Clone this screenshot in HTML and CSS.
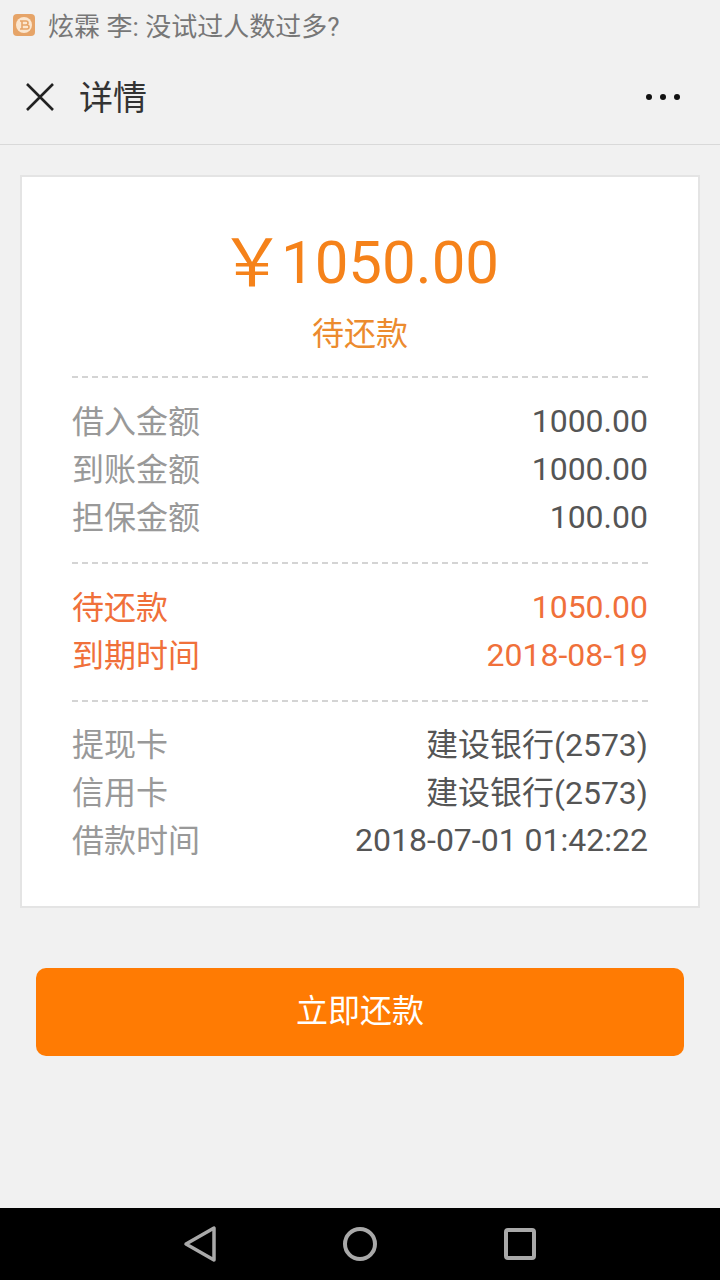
FILE: index.html
```html
<!DOCTYPE html>
<html lang="zh">

<head>
  <meta charset="UTF-8">
  <meta name="viewport" content="width=device-width, initial-scale=1.0">
  <title>详情</title>
  <link rel="stylesheet" href="styles.css">
</head>

<body>
  <div class="screen">
    <!-- 通知栏 -->
    <div class="notice">
      <svg class="notice-icon" width="24" height="24" viewBox="0 0 24 24">
        <rect x="1" y="1" width="22" height="22" rx="4" fill="#e6a468"/>
        <circle cx="12" cy="12" r="8" fill="#fbe6cf"/>
        <path d="M10 8h4a2 2 0 0 1 0 4h-4h5a2 2 0 0 1 0 4h-5zM10 8v8M8 8h2M8 16h2" fill="none" stroke="#e6a468" stroke-width="1.6"/>
      </svg>
      <span class="notice-text">炫霖 李: 没试过人数过多?</span>
    </div>

    <!-- 标题栏 -->
    <div class="topbar">
      <svg class="close-icon" width="30" height="30" viewBox="0 0 30 30">
        <path d="M2 2L28 28M28 2L2 28" stroke="#222" stroke-width="2.6" fill="none"/>
      </svg>
      <span class="topbar-title">详情</span>
      <div class="dots"><i></i><i></i><i></i></div>
    </div>

    <div class="content">
      <div class="card">
        <div class="amount"><span class="yen">￥</span>1050.00</div>
        <div class="status">待还款</div>

        <div class="group">
          <div class="row"><span class="label">借入金额</span><span class="value">1000.00</span></div>
          <div class="row"><span class="label">到账金额</span><span class="value">1000.00</span></div>
          <div class="row"><span class="label">担保金额</span><span class="value">100.00</span></div>
        </div>

        <div class="group group-red">
          <div class="row"><span class="label">待还款</span><span class="value">1050.00</span></div>
          <div class="row"><span class="label">到期时间</span><span class="value">2018-08-19</span></div>
        </div>

        <div class="group group-cards">
          <div class="row"><span class="label">提现卡</span><span class="value cjk">建设银行(2573)</span></div>
          <div class="row"><span class="label">信用卡</span><span class="value cjk">建设银行(2573)</span></div>
          <div class="row"><span class="label">借款时间</span><span class="value">2018-07-01 01:42:22</span></div>
        </div>
      </div>

      <button class="pay-btn"><span>立即还款</span></button>
    </div>

    <!-- 系统导航栏 -->
    <div class="navbar">
      <svg width="36" height="40" viewBox="0 0 36 40">
        <path d="M4 20L32 4V36Z" fill="none" stroke="#a9a9a9" stroke-width="3.5" stroke-linejoin="round"/>
      </svg>
      <svg width="36" height="36" viewBox="0 0 36 36">
        <circle cx="18" cy="18" r="15" fill="none" stroke="#a9a9a9" stroke-width="4"/>
      </svg>
      <svg width="36" height="32" viewBox="0 0 36 32">
        <rect x="4" y="2" width="28" height="28" rx="2" fill="none" stroke="#a9a9a9" stroke-width="4"/>
      </svg>
    </div>
  </div>
</body>

</html>
```

FILE: styles.css
```css
* {
  box-sizing: border-box;
}

body {
  margin: 0;
  background-color: #f1f1f1;
  font-family: Roboto, "Noto Sans CJK SC", sans-serif;
}

.screen {
  width: 720px;
  height: 1280px;
  display: flex;
  flex-direction: column;
}

.notice {
  height: 50px;
  display: flex;
  align-items: center;
  padding-left: 12px;
  gap: 12px;
}

.notice-text {
  padding-bottom: 2px;
  font-size: 26px;
  color: #777;
}

.topbar {
  height: 95px;
  display: flex;
  align-items: center;
  padding: 0 25px;
  border-bottom: 1px solid #d9d9d9;
}

.topbar-title {
  margin-left: 24px;
  padding-bottom: 4px;
  font-size: 34px;
  color: #333;
}

.dots {
  margin-left: auto;
  margin-right: 15px;
  display: flex;
  gap: 8px;
}

.dots i {
  width: 6px;
  height: 6px;
  border-radius: 50%;
  background-color: #111;
}

.content {
  flex: 1;
  padding: 30px 20px 0;
}

.card {
  height: 733px;
  background-color: #fff;
  border: 2px solid #e4e4e4;
  padding: 50px 50px 0;
}

.amount {
  height: 72px;
  line-height: 72px;
  text-align: center;
  font-size: 60px;
  color: #f5821a;
  white-space: nowrap;
}

.yen {
  margin-left: -2px;
  margin-right: -4px;
  line-height: 0;
  font-size: 66px;
  vertical-align: -3px;
}

.status {
  margin-top: 13px;
  line-height: 44px;
  text-align: center;
  font-size: 32px;
  color: #ec8b2e;
}

.group {
  margin-top: 20px;
  padding-top: 19px;
  border-top: 2px dashed #d4d4d4;
}

.group-red {
  margin-top: 21px;
}

.group-cards {
  margin-top: 21px;
  padding-top: 18px;
}

.row {
  height: 48px;
  display: flex;
  justify-content: space-between;
  align-items: center;
  font-size: 32px;
}

.label {
  padding-bottom: 5px;
  color: #999;
}

.value {
  color: #555;
}

.value.cjk {
  padding-bottom: 5px;
}

.group-red .label,
.group-red .value {
  color: #f0703a;
}

.pay-btn {
  display: block;
  width: 648px;
  height: 88px;
  margin: 60px 0 0 16px;
  padding: 0 0 8px;
  border: none;
  border-radius: 10px;
  background-color: #ff7b03;
  color: #fff;
  font-family: inherit;
  font-size: 32px;
}

.navbar {
  height: 72px;
  background-color: #000;
  display: flex;
  align-items: center;
  justify-content: center;
  gap: 124px;
}
```
